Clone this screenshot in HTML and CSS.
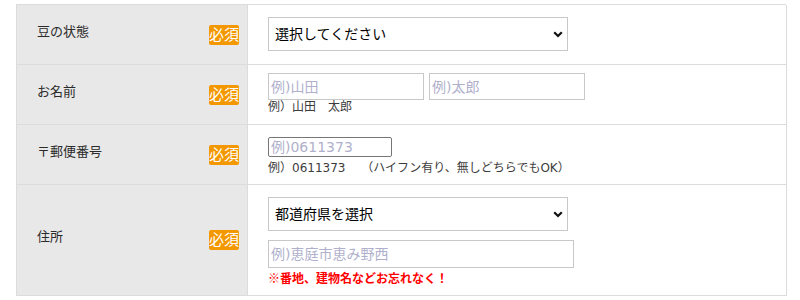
FILE: index.html
```html
<!DOCTYPE html>
<html lang="ja">
<head>
<meta charset="utf-8">
<link rel="stylesheet" href="styles.css">
</head>
<body>
<div class="form">
  <div class="row">
    <div class="label"><span class="label-text">豆の状態</span><span class="req">必須</span></div>
    <div class="field">
      <div class="select-wrap">
        <select class="select"><option>選択してください</option></select>
        <svg class="chev" width="10" height="7" viewBox="0 0 10 7"><path d="M1.2 1.2 L5 5 L8.8 1.2" fill="none" stroke="#111" stroke-width="2.2"/></svg>
      </div>
    </div>
  </div>
  <div class="row">
    <div class="label"><span class="label-text">お名前</span><span class="req">必須</span></div>
    <div class="field field-name">
      <div class="name-inputs">
        <input class="input name" type="text" placeholder="例)山田">
        <input class="input name" type="text" placeholder="例)太郎">
      </div>
      <div class="note">例）山田　太郎</div>
    </div>
  </div>
  <div class="row">
    <div class="label"><span class="label-text">〒郵便番号</span><span class="req">必須</span></div>
    <div class="field">
      <input class="input zip" type="text" placeholder="例)0611373">
      <div class="note">例）0611373　 （ハイフン有り、無しどちらでもOK）</div>
    </div>
  </div>
  <div class="row">
    <div class="label"><span class="label-text">住所</span><span class="req">必須</span></div>
    <div class="field address">
      <div class="select-wrap">
        <select class="select"><option>都道府県を選択</option></select>
        <svg class="chev" width="10" height="7" viewBox="0 0 10 7"><path d="M1.2 1.2 L5 5 L8.8 1.2" fill="none" stroke="#111" stroke-width="2.2"/></svg>
      </div>
      <input class="input addr" type="text" placeholder="例)恵庭市恵み野西">
      <div class="warn">※番地、建物名などお忘れなく！</div>
    </div>
  </div>
</div>
</body>
</html>
```

FILE: styles.css
```css
* { box-sizing: border-box; }
html, body { margin: 0; padding: 0; background: #fff; }
body {
  padding: 4px 0 0 16px;
  font-family: "DejaVu Sans", "Noto Sans CJK JP", sans-serif;
  color: #333;
}
.form {
  width: 770px;
  border-top: 1px solid #dcdcdc;
  border-left: 1px solid #dcdcdc;
}
.row {
  display: grid;
  grid-template-columns: 231px 539px;
}
.label {
  background: #e8e8e8;
  border-right: 1px solid #dcdcdc;
  border-bottom: 1px solid #dcdcdc;
  display: flex;
  align-items: center;
  justify-content: space-between;
  padding: 0 8px 0 20px;
  min-height: 60px;
}
.label-text {
  font-size: 13px;
  line-height: 16px;
  margin-bottom: 6px;
  color: #2b2b2b;
}
.req {
  background: #f39800;
  color: #fff;
  font-size: 15px;
  line-height: 20px;
  height: 20px;
  width: 30px;
  text-align: center;
  border-radius: 2px;
  white-space: nowrap;
  overflow: hidden;
}
.field {
  border-right: 1px solid #dcdcdc;
  border-bottom: 1px solid #dcdcdc;
  display: flex;
  flex-direction: column;
  justify-content: flex-start;
  align-items: flex-start;
  padding: 12px 20px 0;
  min-height: 60px;
}
.field.field-name { padding-top: 8px; }
.field.address { padding: 12px 20px 9px; }
.select-wrap {
  position: relative;
  width: 300px;
  height: 34px;
}
.select {
  appearance: none;
  -webkit-appearance: none;
  width: 300px;
  height: 34px;
  border: 1px solid #c8c8c8;
  border-radius: 0;
  background: #fff;
  color: #000;
  font-family: "DejaVu Sans", "Noto Sans CJK JP", sans-serif;
  font-size: 14px;
  padding: 0 24px 0 6px;
  margin: 0;
}
.chev {
  position: absolute;
  right: 5px;
  top: 14px;
  pointer-events: none;
}
.name-inputs { display: flex; gap: 5px; }
.input {
  font-family: "DejaVu Sans", "Noto Sans CJK JP", sans-serif;
  font-size: 14px;
  color: #000;
  background: #fff;
  border: 1px solid #c8c8c8;
  border-radius: 0;
  padding: 0 2px;
  margin: 0;
  outline: none;
}
.input::placeholder { color: #b0b0cc; }
.name { width: 156px; height: 27px; }
.zip {
  width: 124px;
  height: 20px;
  border-color: #767676;
  border-radius: 2px;
  margin-bottom: 4px;
}
.addr { width: 306px; height: 28px; margin-top: 9px; }
.note {
  font-size: 12px;
  line-height: 15px;
  color: #3c3c3c;
  white-space: pre;
}
.warn {
  margin-top: 2px;
  font-size: 12px;
  line-height: 16px;
  font-weight: bold;
  color: #f00;
  white-space: nowrap;
  font-family: "Noto Sans CJK JP", sans-serif;
}
```
